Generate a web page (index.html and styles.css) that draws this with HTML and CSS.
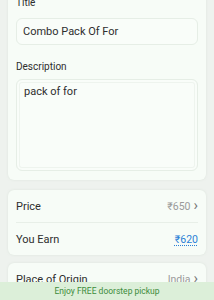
FILE: index.html
```html
<!DOCTYPE html>
<html>
<head>
<meta charset="utf-8">
<link rel="stylesheet" href="styles.css">
</head>
<body>
<div class="page">
  <section class="card card-form">
    <div class="label">Title</div>
    <div class="input">Combo Pack Of For</div>
    <div class="label label-desc">Description</div>
    <div class="textarea">pack of for</div>
  </section>
  <section class="card card-rows">
    <div class="row">
      <span class="row-name">Price</span>
      <span class="row-value">₹650 <span class="chev">›</span></span>
    </div>
    <div class="row row-last">
      <span class="row-name">You Earn</span>
      <span class="row-earn">₹620</span>
    </div>
  </section>
  <section class="card card-rows">
    <div class="row">
      <span class="row-name">Place of Origin</span>
      <span class="row-value">India <span class="chev">›</span></span>
    </div>
  </section>
</div>
<div class="banner">Enjoy FREE doorstep pickup</div>
</body>
</html>
```
FILE: styles.css
```css
html, body {
  margin: 0;
  padding: 0;
}
body {
  background: #eef2ee;
  font-family: Roboto, "Noto Sans", sans-serif;
  font-size: 11px;
  color: #2e2e2e;
  height: 300px;
  overflow: hidden;
}
.page {
  padding: 0 8px;
}
.card {
  background: #f7fcf7;
  border-radius: 6px;
  box-shadow: 0 0 2px rgba(200, 215, 200, 0.5);
}
.card-form {
  margin-top: -12px;
  padding: 8px 8px 9px;
  margin-bottom: 10px;
}
.label {
  font-size: 10px;
  line-height: 14px;
  margin-bottom: 8px;
  color: #2e2e2e;
}
.label-desc {
  margin-top: 15px;
  margin-bottom: 5px;
}
.input {
  height: 27px;
  box-sizing: border-box;
  border: 1px solid #e6eee6;
  border-radius: 6px;
  padding: 0 6px;
  line-height: 25px;
  background: #f9fdf9;
}
.textarea {
  height: 92px;
  box-sizing: border-box;
  border: 1px solid #e6eee6;
  border-radius: 6px;
  padding: 5px 7px;
  line-height: 14px;
  background: #f9fdf9;
  box-shadow: inset 0 0 0 2px #f9fdf9, inset 0 0 0 3px #eef4ee;
}
.card-rows {
  padding: 0 8px;
  margin-bottom: 8px;
}
.row {
  display: flex;
  justify-content: space-between;
  align-items: center;
  height: 32px;
  border-bottom: 1px solid #e8efe8;
}
.row-last {
  border-bottom: none;
}
.row-value {
  color: #9a9a9a;
  font-size: 10.5px;
  display: flex;
  align-items: center;
  gap: 3px;
}
.chev {
  font-size: 15px;
  color: #777;
  line-height: 1;
  margin-top: -1px;
}
.row-earn {
  color: #2a7fd6;
  font-size: 10.5px;
  text-decoration: underline dotted #2a7fd6;
  text-underline-offset: 2px;
}
.banner {
  position: fixed;
  left: 0;
  right: 0;
  bottom: 0;
  height: 18px;
  line-height: 18px;
  background: #dcefd9;
  color: #3c8c3c;
  text-align: center;
  font-size: 8.5px;
}
```
